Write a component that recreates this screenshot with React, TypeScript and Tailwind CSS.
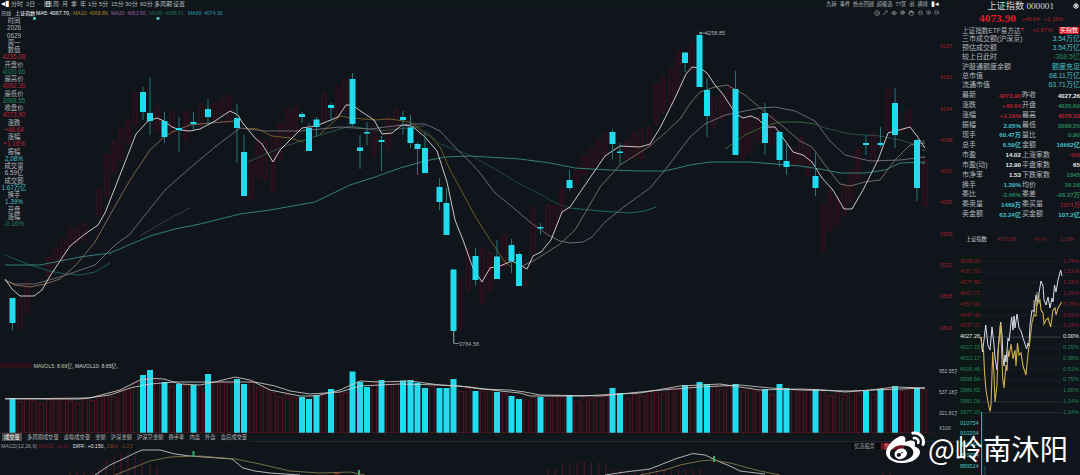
import { CircleMinus, CirclePlus, Eye, Hand, Lock, Pencil, Settings, Smile, Target } from 'lucide-react';
import { FaWeibo } from 'react-icons/fa';
import clsx from 'clsx';

// Falling candles: x, body top, body bottom, wick top, wick bottom
const fallingCandles = [
  [12.5, 298, 323, 298, 330], [143, 92, 112, 87, 120], [150, 113, 121, 78, 135], [164.5, 121, 137, 112, 143],
  [179, 128, 130, 117, 152], [193.5, 122, 124, 112, 130], [208, 109, 117, 99, 124], [237, 118, 128, 104, 163],
  [244, 152, 196, 135, 196], [302, 114, 117, 112, 123], [309, 128, 151, 123, 151], [316.5, 119.5, 127, 117, 137],
  [331, 105, 108, 103, 122], [352.5, 79, 124, 73, 126], [360, 147.5, 151, 135, 169], [367, 132, 133.5, 122, 145],
  [381.5, 140, 142, 136, 171], [403, 117, 120, 111, 135], [410.5, 127.5, 143, 115, 148], [417.5, 144, 149, 142, 175],
  [425, 148, 173, 133, 173], [439.5, 187, 202, 178, 210], [446.5, 203, 235, 188, 235], [453.5, 269.5, 331, 269, 343],
  [475.5, 256, 280, 248, 286], [497, 256.5, 279, 240, 279], [511.5, 245, 261, 239, 273], [519, 254, 286, 252, 286],
  [540.5, 227, 228.5, 223, 235], [569.5, 180, 188, 170, 191], [612.5, 132, 144, 129, 159], [620, 151.5, 153, 143, 165],
  [685, 52.5, 63, 52, 72], [699.5, 35, 87, 32, 87], [707, 90, 116, 78, 137], [735.5, 89, 155, 71, 155],
  [765, 113, 143, 103, 155], [779.5, 132, 160, 131, 167], [786.5, 161, 167, 143, 175], [815.5, 176, 188, 153, 196],
  [866, 143, 145, 135, 155], [880.5, 143, 145, 127, 147], [895, 103, 135, 88, 148], [917, 140, 188, 139, 201],
];

// Rising candles: x, top, bottom
const risingCandles = [
  [20, 300, 328], [27, 282, 312], [49, 258, 276], [56, 248, 264], [63, 240, 260], [70, 228, 246], [77, 228, 242],
  [84, 224, 240], [99, 190, 214], [107, 155, 196], [114, 143, 172], [121, 130, 158], [128, 120, 142], [135, 94, 124],
  [157, 108, 130], [172, 112, 134], [186, 112, 140], [201, 106, 126], [215, 104, 118], [222, 100, 114], [229, 96, 122],
  [251, 160, 198], [258, 140, 176], [265, 142, 178], [273, 136, 190], [280, 124, 158], [288, 110, 136],
  [295, 108, 132], [324, 94, 120], [338, 88, 118], [345, 80, 112], [374, 128, 156], [388, 118, 148],
  [396, 110, 128], [461, 280, 328], [468, 250, 290], [482, 250, 302], [490, 254, 290], [504, 236, 266],
  [526, 262, 286], [533, 208, 252], [548, 206, 232], [555, 206, 228], [562, 190, 212], [577, 168, 182],
  [584, 156, 174], [591, 148, 168], [598, 140, 162], [605, 134, 156], [627, 142, 158], [634, 134, 156],
  [641, 130, 158], [649, 128, 146], [656, 84, 124], [663, 78, 112], [671, 70, 104], [678, 52, 92], [692, 44, 70],
  [714, 98, 126], [722, 94, 118], [729, 88, 112], [743, 120, 158], [750, 116, 152], [758, 118, 140],
  [772, 116, 144], [794, 150, 164], [801, 138, 162], [808, 148, 176], [823, 206, 250], [830, 190, 230],
  [837, 198, 224], [844, 186, 214], [851, 172, 200], [858, 150, 178], [873, 134, 160], [888, 90, 130],
  [902, 112, 130], [909, 110, 128], [925, 160, 205],
];

const fallingVolumes = [
  [12.5, 398], [143, 375], [150, 370], [164.5, 382], [179, 384], [193.5, 385], [208, 374], [237, 379], [244, 384],
  [302, 397], [309, 399], [316.5, 395], [331, 389], [352.5, 371.5], [360, 382], [367, 387], [381.5, 380], [403, 380.5],
  [410.5, 380], [417.5, 383], [425, 388], [439.5, 388], [446.5, 388], [453.5, 379], [475.5, 391], [497, 392],
  [511.5, 396], [519, 399], [540.5, 397], [569.5, 395], [612.5, 388], [620, 393], [685, 385], [699.5, 382],
  [707, 384], [735.5, 384], [765, 389], [779.5, 384], [786.5, 388], [815.5, 389], [866, 391], [880.5, 389],
  [895, 386], [917, 388],
];

const volumeAverage = [
  [5, 399], [90, 398], [120, 390], [140, 380], [155, 378.5], [164, 379], [180, 384], [200, 385], [215, 382], [235, 377],
  [250, 380], [270, 390], [300, 396], [316, 396], [340, 390], [360, 381], [380, 382], [410, 381], [440, 385], [470, 387],
  [500, 391], [520, 393], [530, 396], [580, 396], [640, 393], [680, 386], [700, 385], [720, 384], [740, 387],
  [760, 390], [800, 389], [825, 390], [845, 392], [870, 390], [895, 387], [925, 388],
];

const averageAt = (x: number) => {
  const next = Math.max(1, volumeAverage.findIndex(p => p[0] >= x));
  const [x0, y0] = volumeAverage[next - 1];
  const [x1, y1] = volumeAverage[next];
  return y0 + ((x - x0) / (x1 - x0)) * (y1 - y0);
};

const risingVolumes = Array.from({ length: 127 }, (_, i) => 12.5 + i * 7.236)
  .filter(x => x < 932 && !fallingVolumes.some(v => Math.abs(v[0] - x) < 3))
  .map((x, i) => [x, averageAt(Math.min(x, 924)) + [3, 0, 2, 5, 1][i % 5]]);

const movingAverages = [
  { color: '#1c625a', points: '5,255 30,265 50,271 65,274 80,275 95,272 110,263' },
  { color: '#3c4347', points: '140,236 165,221 190,208' },
  { color: '#30584a', points: '248,162 280,148 310,138 350,126 380,131 425,126' },
  { color: '#1d4b48', points: '425,130 440,144 470,155 500,172 520,184 545,197 560,205 570,208' },
  { color: '#1f7467', points: '570,208 600,211 630,213 645,211 656,207' },
  { color: '#3b7138', points: '725,149 745,135 765,126 780,122 800,122 815,124' },
  { color: '#31504b', points: '815,124 825,128 850,134 880,136 900,140 925,147' },
  {
    color: '#358a83',
    points: '5,265 40,265 80,257 110,253 150,236 175,229 200,224 240,214 270,210 315,202 350,185 375,177 400,168 425,161 445,157 470,156 520,159 550,163 575,168 610,170 640,171 665,171 690,165 710,162 750,162 800,166 820,169 840,173 865,173 885,170 900,163 925,162',
  },
  {
    color: '#77717e',
    points: '5,281 15,284 35,284 60,277 95,265 115,245 130,234 165,190 190,168 215,147 240,128 265,131 300,131 340,127 370,129 410,124 425,124 440,131 455,147 470,162 480,173 495,193 510,205 530,222 548,235 560,241 570,243 583,242 592,237 605,222 625,206 650,188 665,170 690,137 705,124 725,115 740,112 760,108 775,107 795,111 815,121 830,141 845,155 870,161 900,160 925,157',
  },
  {
    color: '#8a7153',
    points: '5,280 15,285 30,287 45,284 60,279 75,266 95,242 110,215 130,180 150,150 163,138 172,132 190,125 210,123 235,121',
  },
  { color: '#786323', points: '245,128 258,129 272,136 290,138 303,142' },
  { color: '#786323', points: '320,134 340,116 352,118 375,120 390,119 410,122 432,138 440,147 450,170 460,188 475,216 490,240 505,262 512,268' },
  {
    color: '#807368',
    points: '520,267 535,260 560,244 575,230 588,208 600,187 620,165 650,146 665,133 680,119 692,101 700,92 715,87 727,85 745,95 765,112 785,128 800,141 812,147 825,165 840,184 850,186 865,182 880,180 895,160 910,145 925,143',
  },
  {
    color: '#ded8d3',
    points: '5,279 12,289 20,296 34,296 42,290 50,276 70,246 85,234 98,225 105,213 120,175 136,134 148,121 157,118 164,121 172,127 180,130 190,131 200,129 215,121 230,111 238,115 242,122 255,138 262,144 273,162 280,150 290,140 302,128 316,126 338,117 346,105 352,105 362,112 374,120 382,134 392,133 402,125 412,126 425,137 437,151 447,182 455,220 463,240 473,268 482,282 490,268 500,266 512,261 527,269 533,256 541,252 551,240 562,212 570,207 585,185 605,156 620,146 640,147 650,144 660,128 675,98 686,74 692,67 700,68 707,73 715,85 722,93 736,114 743,118 751,116 758,119 766,127 775,127 786,142 793,152 803,155 812,162 822,178 833,190 844,209 852,209 863,190 878,160 888,133 910,127 917,136 925,148',
  },
];

const periods = [
  { text: '分时', box: 'w-[15px]' }, { text: '2日', box: 'w-[12px]' }, { text: '·', box: 'w-[6px]' },
  { text: '日', box: 'w-[9px]', active: true }, { text: '周', box: 'w-[9px]' }, { text: '月', box: 'w-[9px]' },
  { text: '季', box: 'w-[9px]' }, { text: '年', box: 'w-[8px]' }, { text: '1分', box: 'w-[11px]' },
  { text: '5分', box: 'w-[12px]' }, { text: '15分', box: 'w-[14px]' }, { text: '30分', box: 'w-[15px]' },
  { text: '60分', box: 'w-[14px]' }, { text: '多周期', box: 'w-[19px]' }, { text: '设置', box: 'w-[14px]' },
];

const dayInfo = [
  ['时间', ''], ['2026', ''], ['0629', ''], ['周一', ''], ['数值', ''], ['4235.08', 'r'], ['开盘价', ''], ['4020.66', 'g'],
  ['最高价', ''], ['4092.30', 'r'], ['最低价', ''], ['3988.55', 'g'], ['收盘价', ''], ['4073.90', 'r'], ['涨跌', ''],
  ['+46.64', 'r'], ['涨幅', ''], ['+1.16%', 'r'], ['振幅', ''], ['2.08%', 'c'], ['成交量', ''], ['6.59亿', ''],
  ['成交额', ''], ['1.67万亿', 'c'], ['换手', ''], ['1.39%', 'c'], ['开盘', ''], ['涨幅', ''], ['-0.16%', 'g'],
];

const tone: Record<string, string> = {
  '': 'text-[#b4b8bb]',
  w: 'text-[#e8eaeb]',
  r: 'text-[#bd2230]',
  d: 'text-[#8d1b27]',
  g: 'text-[#228455]',
  c: 'text-[#45c0c8]',
};

const market = [
  ['三市成交额(沪深京)', '3.54万亿', 'c'], ['预估成交额', '3.54万亿', 'c'], ['较上日此时', '-368.5亿', 'g'],
  ['沪股通额度余额', '额度充足', 'c'], ['总市值', '68.11万亿', 'c'], ['流通市值', '63.71万亿', 'c'],
];

const quotes = [
  ['最新', '4073.90', 'r', '昨收', '4027.26', 'w'], ['涨跌', '+46.64', 'r', '开盘', '4020.69', 'g'],
  ['涨幅', '+1.16%', 'r', '最高', '4078.33', 'r'], ['振幅', '2.05%', 'c', '最低', '3988.55', 'g'],
  ['现手', '60.47万', 'c', '量比', '0.90', 'g'], ['总手', '6.59亿', 'c', '金额', '16662亿', 'c'],
  ['市盈', '14.02', 'w', '上涨家数', '498', 'd'], ['市盈(动)', '12.90', 'w', '平盘家数', '65', 'w'],
  ['市净率', '1.53', 'w', '下跌家数', '1845', 'g'], ['换手', '1.39%', 'c', '均价', '16.16', 'g'],
  ['委比', '-3.46%', 'g', '委差', '-98.27万', 'g'], ['委卖量', '1469万', 'c', '委买量', '1371万', 'd'],
  ['卖金额', '63.24亿', 'c', '买金额', '107.2亿', 'c'],
];

const axisPrices = ['4237', '4191', '4144', '4098', '4051', '4005', '3958', '3912', '3865', '3819'];
const tabs = ['多周期成交量', '虚拟成交量', '金额', '沪深金额', '沪深京金额', '换手率', '内盘', '外盘', '盘后成交量'];

const intradayRows = [
  ['4098.04', '1.74%', 'd'], ['4087.93', '1.51%', 'd'], ['4077.82', '1.25%', 'd'], ['4067.71', '1.00%', 'd'],
  ['4057.60', '0.75%', 'd'], ['4047.49', '0.50%', 'd'], ['4037.37', '0.25%', 'd'], ['4027.26', '0.00%', 'w'],
  ['4017.15', '0.25%', 'g'], ['4012.17', '0.38%', 'g'], ['4006.46', '0.51%', 'g'], ['3998.54', '0.75%', 'g'],
  ['3986.82', '1.00%', 'g'], ['3981.06', '1.14%', 'g'], ['3977.20', '1.24%', 'g'], ['010754', '', 'c'],
  ['910204', '', 'c'], ['897514', '', 'c'], ['893204', '', 'c'], ['889524', '', 'c'],
];

function Toolbar() {
  return (
    <header className="h-[17px] text-[6px] leading-[8px] text-[#b4babd] whitespace-nowrap">
      <div className="flex h-[8px] justify-between bg-[#0f161a] pl-[1px]">
        <div className="flex">
          <span className="w-[10px] text-[8px] text-white">◂▮</span>
          {periods.map(p => (
            <span key={p.text} className={p.box}>
              <span className={clsx(p.active && 'bg-[#4a5358] px-[1px] text-white')}>{p.text}</span>
            </span>
          ))}
        </div>
        <div className="flex gap-[3px] pr-[18px] text-[5.2px]">
          <span>九转</span>
          <span>事件</span>
          <span>热点回顾</span>
          <span>超级选</span>
          <span>77区</span>
          <span>前</span>
          <span>横排</span>
          <span className="text-[7px] text-white">▮◂</span>
        </div>
      </div>
      <div className="flex h-[9px] items-center justify-between pl-[1px]">
        <div className="flex text-[5.1px]">
          <span className="w-[14px]">日线</span>
          <span className="w-[21px] text-white">上证指数</span>
          <span className="w-[37px] text-[5.3px] text-white">MA5: 4067.70,</span>
          <span className="w-[38px] text-[#a08327]">MA10: 4068.89,</span>
          <span className="w-[38px] text-[#93619d]">MA20: 4063.60,</span>
          <span className="w-[39px] text-[#226950]">MA30: 4088.61,</span>
          <span className="text-[#2b9aa8]">MA60: 4074.30</span>
        </div>
        <div className="flex items-center gap-[3.2px] pr-[18px]">
          <Smile size={6} /><Pencil size={5} /><Eye size={6} /><Target size={5} />
          <Hand size={6} /><Lock size={5} /><CirclePlus size={5} /><CircleMinus size={5} />
        </div>
      </div>
    </header>
  );
}

function PriceChart() {
  return (
    <svg width="935" height="344" viewBox="0 17 935 344" fill="none" className="shrink-0">
      <circle cx="34.5" cy="18.5" r="1.6" fill="#54bfc0" />
      <circle cx="158" cy="18.5" r="1.6" fill="#54bfc0" />
      {risingCandles.map(([x, top, bottom]) => (
        <g key={x} stroke="#7b0d20" opacity="0.5">
          <path d={`M${x} ${top - 3}V${bottom + 3}`} strokeWidth="0.6" />
          <rect x={x - 2} y={top} width="4" height={bottom - top} strokeWidth="0.7" fill="#2a0c16" />
        </g>
      ))}
      {movingAverages.map(line => (
        <polyline key={line.points} points={line.points} stroke={line.color} strokeWidth="0.9" strokeLinejoin="round" />
      ))}
      {fallingCandles.map(([x, top, bottom, high, low]) => (
        <g key={x}>
          <path d={`M${x} ${high}V${low}`} stroke="#267f82" strokeWidth="0.9" />
          <rect x={x - 3} y={top} width="6" height={bottom - top} fill="#22dced" />
        </g>
      ))}
      <path d="M453.8 331V343.5H459" stroke="#adb8b8" strokeWidth="0.7" />
      <path d="M700 33H706M702 31.8L700 33L702 34.2" stroke="#adb8b8" strokeWidth="0.7" />
      <text x="459" y="345.5" fontSize="5.6" fill="#9fa4a6">3784.58</text>
      <text x="705" y="35.3" fontSize="5.6" fill="#aaafb1">4258.85</text>
      <path d="M922 141h3M922 150h3M922 157h3M922 163.5h3" stroke="#5c7e80" strokeWidth="0.7" />
    </svg>
  );
}

function VolumeChart() {
  return (
    <svg width="935" height="72" viewBox="0 361 935 72" fill="none" className="shrink-0">
      <rect x="0" y="363" width="32" height="5" fill="#3d0b18" opacity="0.6" />
      <text x="33.5" y="367.6" fontSize="5.2" fill="#c9c9ad">MAVOL5: 8.69亿,</text>
      <text x="75" y="367.6" fontSize="5.2" fill="#d4d6d7">MAVOL10: 8.65亿,</text>
      {risingVolumes.map(([x, top]) => (
        <rect key={x} x={x - 2.3} y={top} width="4.6" height={433 - top} fill="#1a1117" stroke="#631521" strokeWidth="0.8" />
      ))}
      {fallingVolumes.map(([x, top]) => (
        <rect key={x} x={x - 3} y={top} width="6" height={433 - top} fill="#22dced" />
      ))}
      <path d="M0 432.6H935" stroke="#6a1c20" strokeWidth="0.5" opacity="0.7" />
      <polyline points={volumeAverage.map(p => p.join(',')).join(' ')} stroke="#c9c2ba" strokeWidth="0.9" />
      <polyline
        points="5,398.5 45,399 80,399 110,395 130,388 150,384 175,382 255,382 275,386 290,391 310,394 340,392 360,386 400,384 440,385 460,386 480,389 510,390 525,392 540,395 600,396 650,391 700,387 740,385 770,388 800,390 850,391 925,388"
        stroke="#d4d6d6"
        strokeWidth="0.8"
      />
    </svg>
  );
}

function MacdChart() {
  return (
    <svg width="957" height="34" viewBox="0 441 957 34" fill="none" className="shrink-0">
      <path d="M250 441.2H957" stroke="#343b3d" strokeWidth="0.7" />
      <g fontSize="5.2">
        <text x="1" y="447.8" fill="#979b9e">MACD(12,26,9)</text>
        <text x="38.5" y="447.8" fontSize="5" fill="#7b1824">MACD: +0.10,</text>
        <text x="73" y="447.8" fill="#e0e2e3">DIFF: +0.150,</text>
        <text x="107" y="447.8" fill="#79401f">DEA: -0.23</text>
      </g>
      {[70, 77, 84, 92, 99, 106, 114, 121, 128, 135, 142, 150, 157].map((x, i) => (
        <path key={x} d={`M${x} 475V${[472, 471, 472, 473, 468, 460, 455, 454, 452, 456, 459, 464, 467][i]}`} stroke="#6b1720" strokeWidth="0.8" />
      ))}
      {Array.from({ length: 22 }, (_, i) => (
        <path key={i} d={`M${548 + i * 7.25} 475V${i > 1 && i < 9 ? 462 : 469}`} stroke="#5f1821" strokeWidth="0.8" />
      ))}
      <polyline points="95,475 110,465 125,458 135,453 142,450 160,450 175,454 190,456 232,459 243,468 255,471 270,473 300,475" stroke="#c4c7c8" strokeWidth="0.9" />
      <polyline points="115,475 135,467 150,461 170,457 200,456 235,459 260,464 290,471 320,473 350,472 365,475" stroke="#81784a" strokeWidth="0.9" />
      <polyline points="605,475 625,472 650,469 675,459 693,453.5 705,455 720,462 730,466 740,471 765,474" stroke="#bfc2c3" strokeWidth="0.9" />
      <polyline points="640,475 665,470 680,465 700,461 712,460 730,463 760,471 780,475" stroke="#81784a" strokeWidth="0.9" />
      <path d="M193.5 451v6M359 470v5M714 456v6" stroke="#38a968" strokeWidth="2" />
      <path d="M334 474l6-1" stroke="#a9352d" strokeWidth="1.2" />
      <rect x="851" y="443" width="29" height="6.5" rx="1" fill="#080a0d" />
      <text x="854" y="448.2" fontSize="5.2" fill="#a2a6a8">优选股票</text>
      <rect x="881" y="443" width="23" height="6.5" fill="#6e1420" />
      <text x="884" y="448.2" fontSize="5.2" fill="#e66">数据</text>
      <path d="M883 475v-3M890 475v-4" stroke="#5f1821" strokeWidth="0.8" />
    </svg>
  );
}

function Intraday() {
  return (
    <section className="flex h-[240px] flex-col">
      <div className="flex h-[11px] items-center pl-[9px] text-[5.2px]">
        <span className="w-[31px] text-[#d2d5d7]">上证指数</span>
        <span className="w-[37px] text-[#8d1b27]">4073.90</span>
        <span className="w-[26px] text-[#6e1722]">46.64</span>
        <span className="text-[#8d1b27]">1.16%</span>
      </div>
      <div className="flex pt-[10px]">
        <div className="w-[24px] bg-[#0c1815] pl-[3px] text-[5.6px] leading-[10.8px]">
          {intradayRows.map(([price, , color]) => (
            <div key={price} className={clsx('h-[10.8px]', tone[color])}>{price}</div>
          ))}
        </div>
        <svg width="80" height="219" viewBox="981 256 80 219" fill="none" className="overflow-visible">
          {intradayRows.slice(0, 15).map(([price], i) => (
            <path key={price} d={`M981 ${261.5 + i * 10.8}H1061`} stroke={i === 7 ? '#4b5150' : i > 12 ? '#303639' : '#1a2023'} strokeWidth="0.8" />
          ))}
          <path d="M981.6 412V475" stroke="#2bb8c3" strokeWidth="1.1" />
          <path d="M985 466V475" stroke="#1c5a50" strokeWidth="1" />
          <polyline
            points="981,337 982.5,352 984,340 985.7,325 988,346 990,350 992,327 994,345 995,358 997,370 998.5,345 1000.7,322 1002,335 1003,358 1004,366 1005,355 1006,362 1008,338 1009,341 1011.7,317 1013,330 1014,316 1015,328 1017,314 1019,328 1021,331 1023,338 1026.7,349 1028,343 1029,346 1030,325 1032,310 1034,312 1036,295 1037.5,302 1041,281 1043,286 1044,300 1046,305 1048,297 1050,308 1052,298 1053,302 1054.5,285 1056,292 1058,280 1060.7,270 1062,276"
            stroke="#d9dce8"
            strokeWidth="1"
          />
          <polyline
            points="981,337 982,348 983.5,350 984.5,372 986,390 988,402 990,411.5 991,405 992.7,352 994,375 995,402 997,385 998,352 1000.5,324 1002.7,378 1004,388 1006,365 1007,371 1008,350 1009,357 1011,344 1013,359 1015,350 1016,366 1017.5,343 1019,355 1021,353 1023,366 1026,375 1028,354 1030,340 1032,322 1034,315 1036,316 1037,303 1040,300 1041,310 1043,313 1044,324 1046,320 1048,318 1050.7,327 1053,310 1055,308 1056,315 1058,308 1061.7,302"
            stroke="#cdb04a"
            strokeWidth="1.1"
          />
          {/* both lines meet while the index climbs back */}
          <path d="M1034 300V315M1037 292V306M1039 295V304" stroke="#d5c78a" strokeWidth="0.8" />
        </svg>
        <div className="w-[18px] pl-[2px] text-[5.6px] leading-[10.8px]">
          {intradayRows.slice(0, 15).map(([price, percent, color]) => (
            <div key={price} className={clsx('h-[10.8px]', tone[color])}>{percent}</div>
          ))}
        </div>
      </div>
    </section>
  );
}

function QuotePanel() {
  return (
    <aside className="h-[475px] w-[123px] shrink-0 text-[7px]">
      <div className="flex h-[12px] items-center justify-end gap-[19px] pr-[1px]">
        <h1 className="font-['Liberation_Serif','Noto_Sans_CJK_SC',serif] text-[9.2px] leading-[12px] text-[#d7d9da]">
          上证指数 000001
        </h1>
        <Settings size={6} className="text-white" strokeWidth={4} />
      </div>
      <div className="flex h-[14px] items-center pl-[22px]">
        <span className="w-[43px] font-['Liberation_Serif',serif] text-[11.4px] font-bold text-[#df1d24]">4073.90</span>
        <span className="w-[22px] text-[5.6px] text-[#b3202b]">+46.64</span>
        <span className="text-[5.6px] text-[#b3202b]">+1.16%</span>
      </div>
      <div className="flex h-[9px] items-center pl-[5px] text-[#b4b8ba]">
        <span className="w-[70px] whitespace-nowrap text-[6.6px]">上证指数ETF易方达<sup className="text-[5px] text-[#d3202f]">●</sup></span>
        <span className="w-[27px] text-[6px] text-[#a01f2e]">+0.87%</span>
        <span className="h-[7px] w-[20px] bg-[#d51824] text-center text-[6px] leading-[7px] text-white">买指数</span>
      </div>
      {market.map(([label, value, color]) => (
        <div key={label} className="flex h-[9.1px] items-center justify-between pl-[5px] text-[#b4b8ba]">
          <span>{label}</span>
          <span className={tone[color]}>{value}</span>
        </div>
      ))}
      <div className="flex h-[130px] flex-col justify-between pt-[1px]">
        {quotes.map(([label, value, color, label2, value2, color2]) => (
          <div key={label} className="flex h-[9.6px] items-center pl-[5px] text-[#b4b8ba]">
            <span className="w-[26px] whitespace-nowrap">{label}</span>
            <span className={clsx('w-[33px] text-right text-[6.2px] font-bold', tone[color])}>{value}</span>
            <span className="ml-[1px] w-[30px] whitespace-nowrap">{label2}</span>
            <span className={clsx('flex-1 whitespace-nowrap text-right text-[6.2px] font-bold', tone[color2])}>{value2}</span>
          </div>
        ))}
      </div>
      <div className="h-[15px]" />
      <Intraday />
    </aside>
  );
}

export default function App() {
  return (
    <div className="relative flex h-[475px] w-[1080px] overflow-hidden bg-[#10151c] font-['Liberation_Sans','Noto_Sans_CJK_SC',sans-serif]">
      <main className="flex w-[957px] shrink-0 flex-col">
        <Toolbar />
        <div className="flex">
          <PriceChart />
          <div className="flex w-[22px] flex-col pt-[14px] text-[5.6px] leading-[31.3px] text-[#a01f2b]">
            {axisPrices.map(price => (
              <span key={price} className="h-[31.3px] pl-[5px]">{price}</span>
            ))}
          </div>
        </div>
        <div className="flex">
          <VolumeChart />
          <div className="flex flex-col whitespace-nowrap pl-[4px] text-[5px] leading-[20.8px] text-[#b5b9bb]">
            <span>952.55万</span>
            <span>537.18万</span>
            <span>321.81万</span>
            <span className="leading-[10px]">X100</span>
          </div>
        </div>
        <nav className="flex h-[8px] items-center gap-[5px] whitespace-nowrap bg-[#12171b] pl-[2px] text-[5.3px] leading-[8px] text-[#b1b5b8]">
          <span className="bg-[#4a4e50] px-[2px] text-white">成交量</span>
          {tabs.map(tab => <span key={tab}>{tab}</span>)}
        </nav>
        <MacdChart />
      </main>

      <QuotePanel />

      {/* Cursor data box */}
      <div className="absolute left-0 top-[17px] w-[28px] text-center text-[6.3px] leading-[7.25px]">
        {dayInfo.map(([text, color], i) => (
          <div key={i} className={clsx('h-[7.25px]', tone[color])}>{text}</div>
        ))}
      </div>

      {/* Watermark */}
      <div className="absolute left-[886px] top-[428px] flex items-center text-white">
        <FaWeibo size={39} />
        <span className="ml-[3px] whitespace-nowrap font-['Noto_Sans_CJK_SC',sans-serif] text-[28.3px] leading-[40px]">@岭南沐阳</span>
      </div>
    </div>
  );
}
